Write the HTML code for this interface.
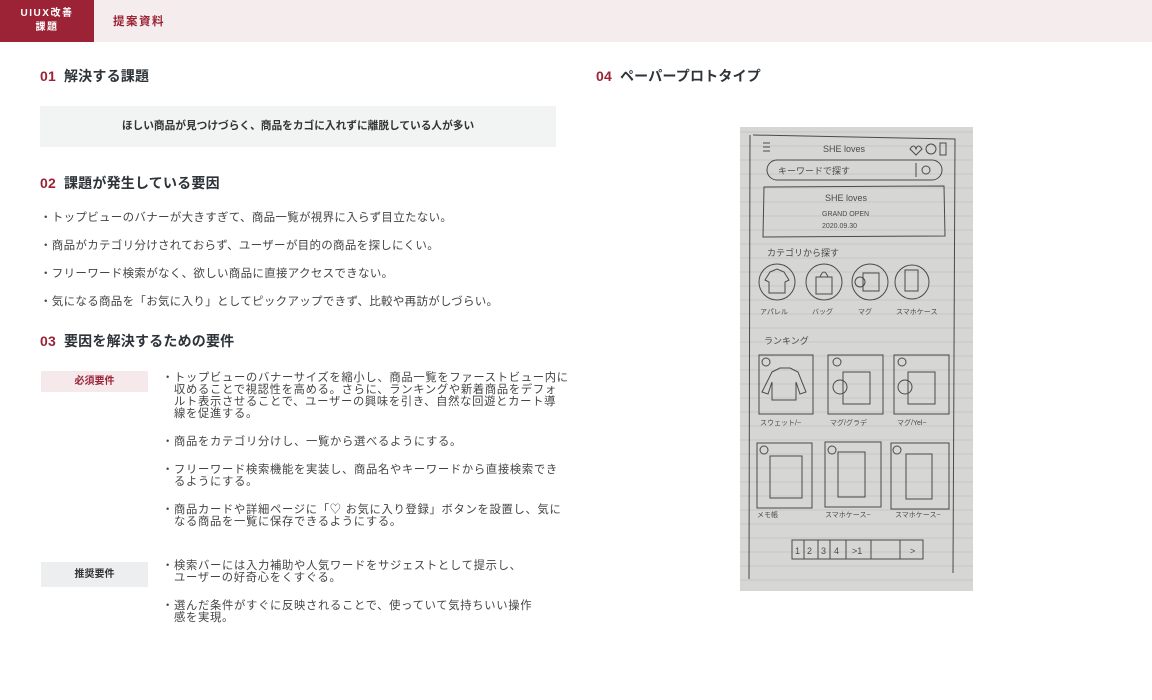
<!DOCTYPE html>
<html><head><meta charset="utf-8"><style>
*{margin:0;padding:0;box-sizing:border-box}
body{width:1152px;height:700px;background:#fff;position:relative;overflow:hidden;font-family:"Liberation Sans","Noto Sans CJK JP",sans-serif;color:#333}
.a{position:absolute;white-space:nowrap}
.top{left:0;top:0;width:1152px;height:42px;background:#f5ecee}
.tag{left:0;top:0;width:94px;height:42px;background:#9b2335;color:#fff;font-size:10px;font-weight:bold;text-align:center;line-height:14px;padding-top:7px;letter-spacing:1.5px}
.h{font-size:14px;font-weight:bold;color:#2d3338;letter-spacing:.2px}
.h b{color:#9b2335;margin-right:8px;font-weight:bold}
.li{font-size:11.5px;color:#444;letter-spacing:.3px}
.req{font-size:11.3px;color:#444;line-height:12px;letter-spacing:.7px}
.req span{padding-left:12px}
.lab{width:107px;font-size:10px;font-weight:bold;text-align:center}
</style></head><body>
<div class="a top"></div>
<div class="a tag">UIUX改善<br>課題</div>
<div class="a" style="left:113px;top:13px;font-size:11.5px;font-weight:bold;color:#9b2335;letter-spacing:1.5px">提案資料</div>

<div class="a h" style="left:40px;top:66px"><b>01</b>解決する課題</div>
<div class="a" style="left:40px;top:106px;width:516px;height:41px;background:#f2f3f3;font-size:10.7px;font-weight:bold;text-align:center;line-height:41px;color:#333">ほしい商品が見つけづらく、商品をカゴに入れずに離脱している人が多い</div>

<div class="a h" style="left:40px;top:173px"><b>02</b>課題が発生している要因</div>
<div class="a li" style="left:40px;top:209px">・トップビューのバナーが大きすぎて、商品一覧が視界に入らず目立たない。</div>
<div class="a li" style="left:40px;top:237px">・商品がカテゴリ分けされておらず、ユーザーが目的の商品を探しにくい。</div>
<div class="a li" style="left:40px;top:265px">・フリーワード検索がなく、欲しい商品に直接アクセスできない。</div>
<div class="a li" style="left:40px;top:293px">・気になる商品を「お気に入り」としてピックアップできず、比較や再訪がしづらい。</div>

<div class="a h" style="left:40px;top:331px"><b>03</b>要因を解決するための要件</div>
<div class="a lab" style="left:41px;top:371px;height:21px;line-height:21px;background:#f5e9ec;color:#9b2335">必須要件</div>
<div class="a lab" style="left:41px;top:562px;height:25px;line-height:25px;background:#eceeef;color:#333">推奨要件</div>
<div class="a req" style="left:162px;top:372px">・トップビューのバナーサイズを縮小し、商品一覧をファーストビュー内に<br><span>収めることで視認性を高める。さらに、ランキングや新着商品をデフォ</span><br><span>ルト表示させることで、ユーザーの興味を引き、自然な回遊とカート導</span><br><span>線を促進する。</span></div>
<div class="a req" style="left:162px;top:436px">・商品をカテゴリ分けし、一覧から選べるようにする。</div>
<div class="a req" style="left:162px;top:464px">・フリーワード検索機能を実装し、商品名やキーワードから直接検索でき<br><span>るようにする。</span></div>
<div class="a req" style="left:162px;top:504px">・商品カードや詳細ページに「♡ お気に入り登録」ボタンを設置し、気に<br><span>なる商品を一覧に保存できるようにする。</span></div>
<div class="a req" style="left:162px;top:560px">・検索バーには入力補助や人気ワードをサジェストとして提示し、<br><span>ユーザーの好奇心をくすぐる。</span></div>
<div class="a req" style="left:162px;top:600px">・選んだ条件がすぐに反映されることで、使っていて気持ちいい操作<br><span>感を実現。</span></div>

<div class="a h" style="left:596px;top:66px"><b>04</b>ペーパープロトタイプ</div>

<svg class="a" style="left:740px;top:127px" width="233" height="464" viewBox="0 0 233 464">
<rect width="233" height="464" fill="#d6d6d4"/>
<g stroke="#c4c5c8" stroke-width="1">
<line x1="0" y1="5" x2="233" y2="5"/><line x1="0" y1="19" x2="233" y2="19"/><line x1="0" y1="33" x2="233" y2="33"/><line x1="0" y1="47" x2="233" y2="47"/><line x1="0" y1="61" x2="233" y2="61"/><line x1="0" y1="75" x2="233" y2="75"/><line x1="0" y1="89" x2="233" y2="89"/><line x1="0" y1="103" x2="233" y2="103"/><line x1="0" y1="117" x2="233" y2="117"/><line x1="0" y1="131" x2="233" y2="131"/><line x1="0" y1="145" x2="233" y2="145"/><line x1="0" y1="159" x2="233" y2="159"/><line x1="0" y1="173" x2="233" y2="173"/><line x1="0" y1="187" x2="233" y2="187"/><line x1="0" y1="201" x2="233" y2="201"/><line x1="0" y1="215" x2="233" y2="215"/><line x1="0" y1="229" x2="233" y2="229"/><line x1="0" y1="243" x2="233" y2="243"/><line x1="0" y1="257" x2="233" y2="257"/><line x1="0" y1="271" x2="233" y2="271"/><line x1="0" y1="285" x2="233" y2="285"/><line x1="0" y1="299" x2="233" y2="299"/><line x1="0" y1="313" x2="233" y2="313"/><line x1="0" y1="327" x2="233" y2="327"/><line x1="0" y1="341" x2="233" y2="341"/><line x1="0" y1="355" x2="233" y2="355"/><line x1="0" y1="369" x2="233" y2="369"/><line x1="0" y1="383" x2="233" y2="383"/><line x1="0" y1="397" x2="233" y2="397"/><line x1="0" y1="411" x2="233" y2="411"/><line x1="0" y1="425" x2="233" y2="425"/><line x1="0" y1="439" x2="233" y2="439"/><line x1="0" y1="453" x2="233" y2="453"/>
</g>
<g fill="none" stroke="#4a4a4a" stroke-width="1">
<path d="M13 8 L215 12 L213 446 M10 8 L9 452"/>
<line x1="23" y1="16" x2="30" y2="16"/><line x1="23" y1="20" x2="30" y2="20"/><line x1="23" y1="24" x2="30" y2="24"/>
<circle cx="191" cy="22" r="5"/><path d="M170 22 q4 -6 6 0 q2 -6 6 0 l-6 6z"/><rect x="200" y="16" width="6" height="12"/>
<rect x="27" y="33" width="175" height="20" rx="10"/>
<line x1="176" y1="36" x2="176" y2="50"/><circle cx="186" cy="43" r="4"/>
<path d="M24 60 L204 59 L205 109 L23 110 Z"/>
<circle cx="37" cy="155" r="18"/><circle cx="84" cy="155" r="18"/><circle cx="130" cy="155" r="18"/><circle cx="172" cy="155" r="17"/>
<path d="M30 145 l7 -3 l7 3 l5 8 l-4 2 l0 11 l-16 0 l0 -11 l-4 -2z"/>
<rect x="76" y="150" width="16" height="17"/><path d="M80 150 q4 -10 8 0"/>
<rect x="123" y="146" width="16" height="18"/><circle cx="120" cy="155" r="5"/>
<rect x="165" y="143" width="13" height="21"/>
<rect x="19" y="228" width="54" height="59"/><rect x="88" y="228" width="55" height="59"/><rect x="154" y="228" width="55" height="59"/>
<rect x="17" y="316" width="55" height="65"/><rect x="85" y="315" width="56" height="65"/><rect x="151" y="316" width="58" height="66"/>
<path d="M32 245 l8 -4 l10 0 l8 4 l8 20 l-6 2 l-4 -12 l0 18 l-24 0 l0 -18 l-4 12 l-6 -2z"/>
<rect x="103" y="245" width="27" height="32"/><circle cx="100" cy="260" r="7"/>
<rect x="168" y="245" width="27" height="32"/><circle cx="165" cy="260" r="7"/>
<rect x="30" y="329" width="32" height="42"/><rect x="98" y="325" width="27" height="45"/><rect x="166" y="327" width="26" height="45"/>
<circle cx="26" cy="235" r="4"/><circle cx="97" cy="235" r="4"/><circle cx="162" cy="235" r="4"/>
<circle cx="24" cy="323" r="4"/><circle cx="92" cy="323" r="4"/><circle cx="157" cy="323" r="4"/>
<rect x="52" y="413" width="131" height="19"/>
<line x1="64" y1="413" x2="64" y2="432"/><line x1="78" y1="413" x2="78" y2="432"/><line x1="90" y1="413" x2="90" y2="432"/><line x1="106" y1="413" x2="106" y2="432"/><line x1="131" y1="413" x2="131" y2="432"/><line x1="160" y1="413" x2="160" y2="432"/>
</g>
<g fill="#4a4a4a" font-family="Liberation Sans,'Noto Sans CJK JP',sans-serif" font-size="9">
<text x="83" y="25">SHE loves</text>
<text x="38" y="47">キーワードで探す</text>
<text x="85" y="74">SHE loves</text>
<text x="82" y="89" font-size="7">GRAND OPEN</text>
<text x="82" y="101" font-size="7">2020.09.30</text>
<text x="27" y="129">カテゴリから探す</text>
<text x="20" y="187" font-size="7">アパレル</text><text x="72" y="187" font-size="7">バッグ</text><text x="118" y="187" font-size="7">マグ</text><text x="156" y="187" font-size="7">スマホケース</text>
<text x="24" y="217">ランキング</text>
<text x="20" y="298" font-size="7">スウェット/~</text><text x="90" y="298" font-size="7">マグ/グラデ</text><text x="157" y="298" font-size="7">マグ/Yel~</text>
<text x="17" y="390" font-size="7">メモ帳</text><text x="85" y="390" font-size="7">スマホケース~</text><text x="155" y="390" font-size="7">スマホケース~</text>
<text x="55" y="427">1</text><text x="67" y="427">2</text><text x="81" y="427">3</text><text x="94" y="427">4</text><text x="112" y="427">&gt;1</text><text x="170" y="427">&gt;</text>
</g>
</svg>
</body></html>
